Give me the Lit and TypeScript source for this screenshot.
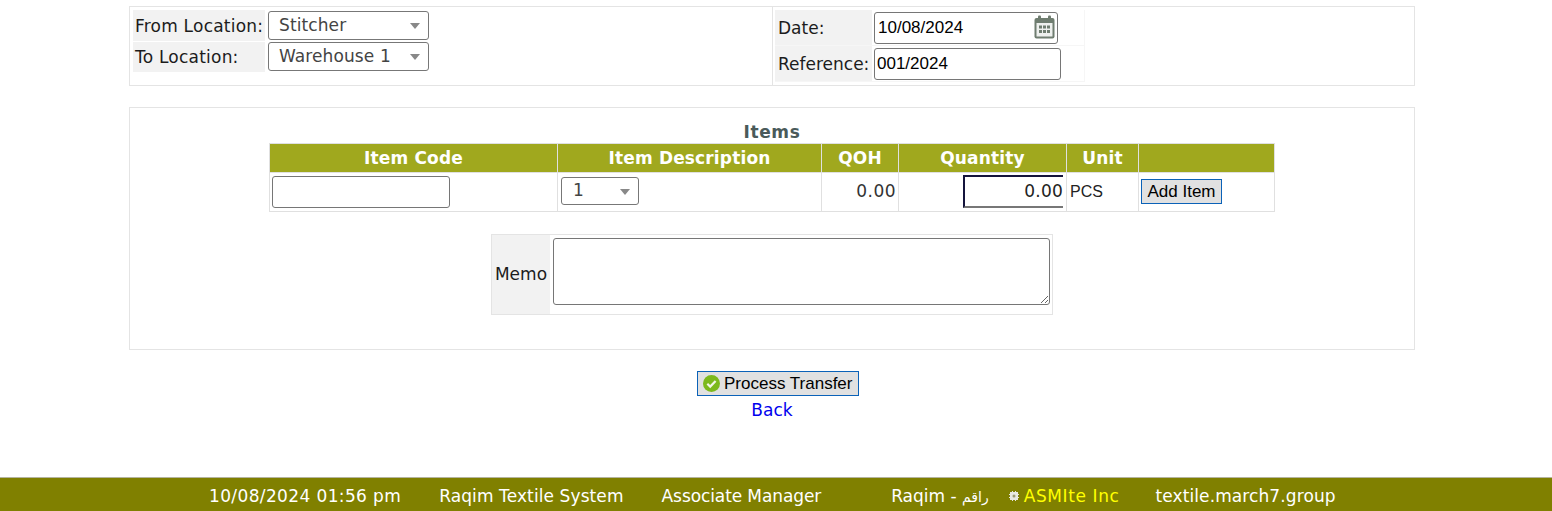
import { LitElement, html, css } from "lit";
import { customElement } from "lit/decorators.js";

const select = (value: string, cls: string) => html`
  <span class="sel ${cls}">
    <select><option>${value}</option></select>
    <i class="arrow"></i>
  </span>`;

@customElement("app-root")
export class AppRoot extends LitElement {
  static styles = css`
    :host { display: flex; flex-direction: column; width: 1552px; height: 511px; background: #fff; color: #222; font: 17px "DejaVu Sans", Verdana, sans-serif; overflow: hidden; }
    * { box-sizing: border-box; }
    input, textarea, select { font-family: "Liberation Sans", Arial, sans-serif; background: #fff; border: 1px solid #767676; border-radius: 3px; color: #000; outline: none; margin: 0; }
    main { display: flex; flex-direction: column; margin: 6px 137px 0 129px; flex: 1; }
    .top { display: flex; height: 80px; border: 1px solid #e4e4e4; }
    .top-l { width: 642px; padding: 3px 0 0 3px; display: grid; grid-template-columns: 132px auto; grid-template-rows: 31px 30px; row-gap: 1px; justify-content: start; }
    .lab { background: #f2f2f2; display: flex; align-items: center; padding-left: 2px; color: #1c1c1c; }
    .wide { letter-spacing: 0.22px; }
    .sel { position: relative; display: block; }
    .sel select { appearance: none; -webkit-appearance: none; display: block; width: 100%; height: 100%; font: 17px "DejaVu Sans", Verdana, sans-serif; letter-spacing: 0.1px; color: #444; padding: 0 0 2px 10px; border-color: #777; }
    .arrow { position: absolute; right: 9px; top: 12px; border: 5px solid transparent; border-top: 6px solid #888; border-bottom: 0; }
    .s-loc { width: 161px; height: 29px; margin: 1px 0 0 3px; }
    .s-loc2 { width: 161px; height: 29px; margin: 0 0 0 3px; }
    .top-r { flex: 1; border-left: 1px solid #e4e4e4; padding: 3px 0 0 2px; }
    .r-table { width: 310px; height: 72px; display: grid; grid-template-columns: 97px 212px; grid-template-rows: 35px 35px; row-gap: 1px; background: #f6f6f6; padding-right: 1px; }
    .r-val { background: #fff; position: relative; }
    .lab.r { padding-left: 3px; }
    .f-date { display: block; width: 184px; height: 32px; margin: 2px 0 0 2px; font-size: 17px; padding: 0 3px; }
    .f-ref { display: block; width: 187px; height: 32px; margin: 2px 0 0 2px; font-size: 17px; padding: 0 2px; }
    .cal { position: absolute; left: 162px; top: 5px; }
    .items { margin-top: 21px; height: 243px; border: 1px solid #e4e4e4; display: flex; flex-direction: column; align-items: center; padding: 14px 0 0 0; }
    .cap { font-weight: 700; font-size: 17px; letter-spacing: 0.6px; color: #4a5a5a; height: 21px; line-height: 20px; }
    .grid { width: 1006px; display: grid; grid-template-columns: 287px 263px 76px 167px 71px 135px; grid-template-rows: 28px 38px; gap: 1px; background: #e0e0e0; border: 1px solid #e0e0e0; }
    .th { background: #a0a81e; color: #fff; font-weight: 700; letter-spacing: 0.15px; display: flex; align-items: center; justify-content: center; padding-bottom: 1px; }
    .td { background: #fff; display: flex; align-items: center; overflow: hidden; position: relative; }
    .i-code { width: 178px; height: 32px; margin-left: 2px; font-size: 16px; }
    .s-one { width: 78px; height: 28px; margin-left: 3px; margin-top: -2px; }
    .s-one select { padding-left: 11px; }
    .num { justify-content: flex-end; padding: 0 2px 2px 0; color: #333; letter-spacing: 0.45px; }
    .qty { width: 100px; height: 33px; flex: none; margin: 0 0 2px 64px; border-width: 2px 0 2px 2px; border-style: solid; border-color: #14143c #fff #777 #14143c; border-radius: 0; padding: 0; text-align: right; font: 17px "DejaVu Sans", Verdana, sans-serif; letter-spacing: 0.2px; color: #222; }
    .pcs { font: 16px "Liberation Sans", Arial, sans-serif; padding: 0 0 0 3px; color: #222; }
    button { font: 17px "Liberation Sans", Arial, sans-serif; background: #e1e1e1; border: 1px solid #0b62b8; color: #000; padding: 0; margin: 0; display: inline-flex; align-items: center; }
    .add { width: 81px; height: 25px; margin: -1px 0 0 2px; justify-content: center; }
    .memo { margin-top: 22px; width: 562px; height: 81px; border: 1px solid #e4e4e4; display: flex; }
    .memo-l { width: 58px; background: #f2f2f2; display: flex; align-items: center; justify-content: center; color: #1c1c1c; margin-right: 2px; padding-bottom: 2px; }
    textarea { display: block; width: 497px; height: 67px; margin: 3px 0 0 1px; resize: both; padding: 2px; }
    .act { display: flex; flex-direction: column; align-items: center; margin-top: 21px; }
    .proc { width: 162px; height: 25px; padding-left: 5px; gap: 4px; margin-left: 12px; white-space: nowrap; }
    a { color: #0000ee; text-decoration: none; margin-top: 4px; line-height: 20px; }
    footer { height: 34px; background: #808000; border-top: 1px solid #b5b5a0; display: flex; align-items: center; padding: 3px 0 0 209px; color: #fff; font-size: 17px; white-space: nowrap; }
    .g38 { margin-left: 38px; } .g70 { margin-left: 70px; } .g20 { margin-left: 20px; } .g36 { margin-left: 36px; }
    .ls-date { letter-spacing: 0.37px; }
    .ls-sys { letter-spacing: 0.1px; }
    .ls-mgr { letter-spacing: -0.1px; }
    .ls-co { letter-spacing: 0.6px; }
    .ar { font-size: 14px; }
    .co { color: #ff0; margin-left: 5px; }
    .gear { display: block; }
  `;

  render() {
    return html`
      <main>
        <section class="top">
          <div class="top-l">
            <div class="lab wide">From Location:</div>${select("Stitcher", "s-loc")}
            <div class="lab wide">To Location:</div>${select("Warehouse 1", "s-loc2")}
          </div>
          <div class="top-r">
            <div class="r-table">
              <div class="lab r">Date:</div>
              <div class="r-val">
                <input class="f-date" value="10/08/2024" />
                <svg class="cal" width="21" height="24" viewBox="0 0 21 24">
                  <rect x="0.5" y="3" width="20" height="20.5" rx="2" fill="#6f7d70" />
                  <rect x="4" y="0.5" width="3" height="5" rx="1" fill="#6f7d70" />
                  <rect x="14" y="0.5" width="3" height="5" rx="1" fill="#6f7d70" />
                  <rect x="2.5" y="8" width="16" height="13.5" fill="#eef0ee" />
                  <g fill="#6f7d70">
                    <rect x="5" y="10.5" width="3" height="3" /><rect x="9" y="10.5" width="3" height="3" /><rect x="13" y="10.5" width="3" height="3" />
                    <rect x="5" y="15" width="3" height="3" /><rect x="9" y="15" width="3" height="3" /><rect x="13" y="15" width="3" height="3" />
                  </g>
                </svg>
              </div>
              <div class="lab r">Reference:</div>
              <div class="r-val"><input class="f-ref" value="001/2024" /></div>
            </div>
          </div>
        </section>

        <section class="items">
          <div class="cap">Items</div>
          <div class="grid">
            <div class="th">Item Code</div>
            <div class="th">Item Description</div>
            <div class="th">QOH</div>
            <div class="th">Quantity</div>
            <div class="th">Unit</div>
            <div class="th"></div>
            <div class="td"><input class="i-code" /></div>
            <div class="td">${select("1", "s-one")}</div>
            <div class="td num">0.00</div>
            <div class="td"><input class="qty" value="0.00" /></div>
            <div class="td pcs">PCS</div>
            <div class="td"><button class="add">Add Item</button></div>
          </div>
          <div class="memo">
            <div class="memo-l">Memo</div>
            <div><textarea></textarea></div>
          </div>
        </section>

        <div class="act">
          <button class="proc">
            <svg width="17" height="17" viewBox="0 0 17 17">
              <circle cx="8.5" cy="8.5" r="8.5" fill="#7cb91c" />
              <path d="M4.3 8.8 L7.2 11.6 L12.6 6" fill="none" stroke="#f2f6e6" stroke-width="2.2" />
            </svg>
            Process Transfer
          </button>
          <a href="#">Back</a>
        </div>
      </main>
      <footer>
        <span class="ls-date">10/08/2024 01:56 pm</span>
        <span class="g38 ls-sys">Raqim Textile System</span>
        <span class="g38 ls-mgr">Associate Manager</span>
        <span class="g70">Raqim - <span class="ar">راقم</span></span>
        <svg class="gear g20" width="10" height="10" viewBox="0 0 10 10">
          <path fill="#e8e8e0" d="M3 0h1v1h2V0h1v1h2v2h1v1H9v2h1v1H9v2H7v1H6V9H4v1H3V9H1V7H0V6h1V4H0V3h1V1h2z" />
          <circle cx="5" cy="5" r="1.5" fill="#9a9a70" />
        </svg>
        <span class="co ls-co">ASMIte Inc</span>
        <span class="g36 ls-sys">textile.march7.group</span>
      </footer>
    `;
  }
}
